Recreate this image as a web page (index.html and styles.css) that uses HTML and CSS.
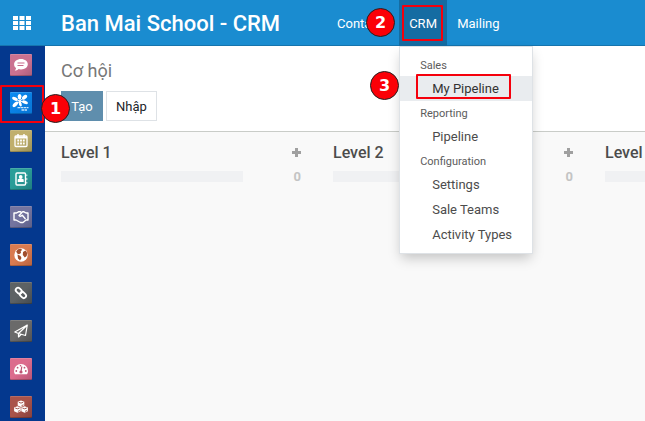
FILE: index.html
```html
<!DOCTYPE html>
<html lang="vi">
<head>
<meta charset="utf-8">
<title>Ban Mai School - CRM</title>
<link rel="stylesheet" href="styles.css">
</head>
<body>
<header class="navbar">
  <div class="apps">
    <svg width="18" height="14" viewBox="0 0 18 14" fill="#fff"><path d="M0 0h5v4H0zM6.500 0h5v4h-5zM13 0h5v4h-5zM0 5h5v4H0zM6.500 5h5v4h-5zM13 5h5v4h-5zM0 10h5v4H0zM6.500 10h5v4h-5zM13 10h5v4h-5z"/></svg>
  </div>
  <div class="brand">Ban Mai School - CRM</div>
  <nav class="menu">
    <a class="menu-item">Contacts</a>
    <div class="menu-item open">CRM
      <div class="dropdown">
        <div class="group">Sales</div>
        <a class="entry active">My Pipeline</a>
        <div class="group">Reporting</div>
        <a class="entry">Pipeline</a>
        <div class="group">Configuration</div>
        <a class="entry">Settings</a>
        <a class="entry">Sale Teams</a>
        <a class="entry">Activity Types</a>
      </div>
    </div>
    <a class="menu-item">Mailing</a>
  </nav>
</header>
<div class="body">
  <aside class="sidebar">
    <div class="app pink"><svg viewBox="0 0 22 22"><path fill="#fff" d="M11 5c4 0 6.800 2.300 6.800 5.200S15 15.400 11 15.400c-.9 0-1.700-.1-2.400-.3-1 1-2.400 1.500-3.900 1.500.9-.7 1.300-1.500 1.300-2.500-1.200-1-1.900-2.300-1.900-3.900C4.100 7.300 7 5 11 5z"/><path d="M7.500 9h7M7.500 11.500h6" stroke="#c76a8b" stroke-width="1.200"/></svg></div>
    <div class="app azure"><svg viewBox="0 0 22 22"><g fill="#fff"><ellipse cx="9.600" cy="4.600" rx="1.900" ry="2.700"/><ellipse cx="14.600" cy="5.200" rx="1.800" ry="3" transform="rotate(48 14.600 5.200)"/><ellipse cx="4.900" cy="6.800" rx="1.700" ry="3" transform="rotate(-65 4.900 6.800)"/><ellipse cx="5.400" cy="12.300" rx="1.800" ry="3.500" transform="rotate(45 5.400 12.300)"/><ellipse cx="10.300" cy="12" rx="1.400" ry="2.500" transform="rotate(-15 10.300 12)"/><ellipse cx="15" cy="10.300" rx="1.600" ry="3.100" transform="rotate(-70 15 10.300)"/></g><path d="M5 7l5 2 4-3.500M10 5v8M6 12l4-3 5 1.500" fill="none" stroke="#fff" stroke-width="1"/><path d="M7.500 15.600h11M11.500 18h6" stroke="#c8e4fb" stroke-width="1.400" stroke-dasharray="2.500 .5"/></svg></div>
    <div class="app olive"><svg viewBox="0 0 22 22" fill="none" stroke="#fff"><rect x="5" y="6" width="12" height="10.500" rx="1" stroke-width="1.300"/><path d="M5 7.500h12" stroke-width="2"/><path d="M8 4v3M14 4v3" stroke-width="1.500"/><path d="M7.300 10.500h8M7.300 13.500h8" stroke-width="1.800" stroke-dasharray="1.800 1"/></svg></div>
    <div class="app teal"><svg viewBox="0 0 22 22" fill="none" stroke="#fff"><rect x="6" y="5" width="9.500" height="12" rx="1" stroke-width="1.400"/><path d="M16.800 6.500v1.500M16.800 10v2M16.800 14v1.500" stroke-width=".8"/><circle cx="10.700" cy="9" r="1.900" fill="#fff" stroke="none"/><path fill="#fff" stroke="none" d="M7.700 14v-2q0-1.500 3-1.500t3 1.500v2z"/></svg></div>
    <div class="app violet"><svg viewBox="0 0 22 22" fill="none" stroke="#fff" stroke-width="1.400" stroke-linejoin="round"><path d="M4 7h2.500l2-1.200h2l1 1 1.200-1H14L16 7h2v7h-2l-3 2.500h-2.500L6 14H4z"/><path d="M11.500 7L9 9.500q1.500 1.500 3.300-.2L15.500 13"/></svg></div>
    <div class="app orange"><svg viewBox="0 0 22 22"><circle cx="11" cy="11" r="6.700" fill="#fff"/><path fill="#a04f2e" d="M8 5.300l3-.6 1.200 1.300-1.500 1L11 9l-2 1.200-1.800-.7-1-2zM13 8l2.500-1.500 1.700 2.500-.5 3-1.900 1.500-2-2.500zM7.500 10.500l3 1.500 1 2-1.500 2.500-2-2z"/></svg></div>
    <div class="app slate"><svg viewBox="0 0 22 22" fill="none" stroke="#fff" stroke-width="1.800"><rect x="-3.400" y="-2.300" width="6.800" height="4.600" rx="2.300" transform="translate(8.800 8.800) rotate(45)"/><rect x="-3.400" y="-2.300" width="6.800" height="4.600" rx="2.300" transform="translate(13 13) rotate(45)"/></svg></div>
    <div class="app gray"><svg viewBox="0 0 22 22" fill="none" stroke="#fff" stroke-width="1.200" stroke-linejoin="round"><path d="M17.300 5L4.800 12l3.700 1.500L15.500 15.500zM17.300 5l-8.800 8.500V17l2.500-2.500"/></svg></div>
    <div class="app rose"><svg viewBox="0 0 22 22"><path fill="#fff" d="M4 13a7 7 0 0 1 14 0q0 1.700-1 3.200H5Q4 14.700 4 13z"/><path d="M11.800 8.500L11 13.500" stroke="#bd5474" stroke-width="1.200"/><g fill="#bd5474"><circle cx="11" cy="14" r="1.600"/><circle cx="6.300" cy="13" r=".9"/><circle cx="7.600" cy="9.700" r=".9"/><circle cx="10.500" cy="7.800" r=".8"/><circle cx="14.500" cy="9.700" r=".9"/><circle cx="15.800" cy="13" r=".9"/></g></svg></div>
    <div class="app brick"><svg viewBox="0 0 22 22"><g fill="#fff"><path d="M11 4.500l3.300 1.300v3.700L11 11 7.700 9.500V5.800z"/><path d="M7.400 10.200l3.300 1.300v3.700l-3.300 1.500-3.300-1.500v-3.700z"/><path d="M14.600 10.200l3.300 1.300v3.700l-3.300 1.500-3.300-1.500v-3.700z"/></g><path d="M8.800 6.300l2.200.8 2.200-.8M11.500 9.700l2-.9M5.200 12l2.200.8 2.200-.8M7.900 15.400l2-.9M12.400 12l2.200.8 2.200-.8M15.100 15.400l2-.9" fill="none" stroke="#98483f" stroke-width=".9"/></svg></div>
  </aside>
  <main class="content">
    <section class="panel">
      <h1>Cơ hội</h1>
      <div class="buttons"><button class="btn primary">Tạo</button><button class="btn">Nhập</button></div>
    </section>
    <section class="board">
      <div class="column"><div class="row"><h2>Level 1</h2><span class="plus"></span></div><div class="row"><div class="bar"></div><b>0</b></div></div>
      <div class="column"><div class="row"><h2>Level 2</h2><span class="plus"></span></div><div class="row"><div class="bar"></div><b>0</b></div></div>
      <div class="column"><div class="row"><h2>Level</h2></div><div class="row"><div class="bar"></div></div></div>
    </section>
  </main>
</div>
<div class="frame frame-app"></div>
<div class="frame frame-crm"></div>
<div class="frame frame-pipeline"></div>
<div class="step step-one">1</div>
<div class="step step-two">2</div>
<div class="step step-three">3</div>
</body>
</html>
```
FILE: styles.css
```css
* { box-sizing: border-box; }
body {
  margin: 0;
  width: 645px;
  height: 421px;
  overflow: hidden;
  position: relative;
  font: 13px/20px Roboto, sans-serif;
  color: #4c4c4c;
}
.navbar {
  display: flex;
  height: 46px;
  background: #1a8cd0;
  border-bottom: 1px solid #1674ad;
  color: #fff;
}
.apps { width: 61px; padding: 16px 0 0 13px; }
.apps svg { display: block; }
.brand { width: 266px; font-size: 22px; font-weight: 500; line-height: 47px; white-space: nowrap; }
.menu { display: flex; line-height: 47px; }
.menu-item { padding: 0 10px; height: 46px; }
.open { position: relative; background: #156ca2; width: 48px; }
.dropdown {
  position: absolute;
  z-index: 2;
  top: 46px;
  left: 0;
  width: 134px;
  padding: 6px 0;
  background: #fff;
  border: 1px solid #dee2e6;
  box-shadow: 0 6px 12px -2px rgba(0, 0, 0, .22);
  color: #4c4c4c;
}
.group { height: 23px; line-height: 25px; padding-left: 20px; font-size: 11px; color: #5c5c5c; }
.entry { display: block; height: 25px; line-height: 25px; padding-left: 32px; white-space: nowrap; }
.active { background: #e9ecef; color: #333; }
.body { display: flex; height: 375px; }
.sidebar {
  width: 45px;
  background: #04388e;
  padding: 8px 0 0 10px;
  display: flex;
  flex-direction: column;
  gap: 16px;
}
.app { width: 22px; height: 22px; flex: none; border-radius: 1px; box-shadow: inset 0 -1px rgba(0, 0, 0, .2), inset 0 1px rgba(255, 255, 255, .15); }
.app svg { display: block; width: 22px; height: 22px; }
.pink { background: linear-gradient(135deg, #cb7190 60%, #a85e7c); }
.azure { background: linear-gradient(135deg, #0b8cf4, #0875d4); }
.olive { background: linear-gradient(135deg, #c0af6c 50%, #9a9056); }
.teal { background: linear-gradient(135deg, #2a9d98 45%, #1f7d80); }
.violet { background: linear-gradient(135deg, #74749f 50%, #5d6088); }
.orange { background: linear-gradient(135deg, #d97b50 50%, #b76340); }
.slate { background: linear-gradient(135deg, #5d6264 50%, #434a50); }
.gray { background: linear-gradient(135deg, #6a6a6a 50%, #505153); }
.rose { background: linear-gradient(135deg, #dc6c8d 50%, #b95576); }
.brick { background: linear-gradient(135deg, #a9534a 50%, #86413e); }
.content { flex: 1; min-width: 0; display: flex; flex-direction: column; }
.panel { height: 86px; padding: 13px 16px 0; border-bottom: 1px solid #c9ccc8; background: #fff; }
h1 { margin: 0 0 8px; font-size: 18px; line-height: 24px; font-weight: 400; color: #777; }
.buttons { display: flex; gap: 3px; }
.btn { height: 30px; width: 51px; padding: 2px 0 0; border: 1px solid #dee2e6; background: #fff; font: 13px/20px Roboto, sans-serif; color: #212529; }
.primary { width: 42px; background: #5f8ead; border-color: #5f8ead; color: #fff; }
.board { flex: 1; display: flex; background: #f9f9f9; padding-left: 16px; overflow: hidden; }
.column { flex: none; width: 272px; padding: 8px 32px 0 0; }
.row { display: flex; align-items: center; justify-content: space-between; height: 24px; }
h2 { margin: 2px 0 0; font-size: 16px; font-weight: 500; line-height: 24px; }
.plus { width: 9px; height: 9px; background: linear-gradient(#a0a0a0, #a0a0a0) center / 9px 3px no-repeat, linear-gradient(#a0a0a0, #a0a0a0) center / 3px 9px no-repeat; }
.bar { width: 182px; height: 11px; margin-top: 1px; background: #f0f1f3; }
.row b { margin-top: 2px; font-weight: 700; color: #c4c4c4; }
.frame { position: absolute; z-index: 3; border: 2px solid #f5000c; border-radius: 1px; }
.frame-app { left: 0; top: 85px; width: 44px; height: 38px; }
.frame-crm { left: 402px; top: 5px; width: 41px; height: 36px; }
.frame-pipeline { left: 416px; top: 74px; width: 95px; height: 25px; }
.step {
  position: absolute;
  z-index: 4;
  width: 29px;
  height: 29px;
  border: 1px solid #222;
  border-radius: 50%;
  background: #fb0007;
  color: #fff;
  font: bold 16px/28px "DejaVu Sans", sans-serif;
  text-align: center;
}
.step-one { left: 41px; top: 94px; }
.step-two { left: 366px; top: 8px; }
.step-three { left: 370px; top: 71px; }
```
